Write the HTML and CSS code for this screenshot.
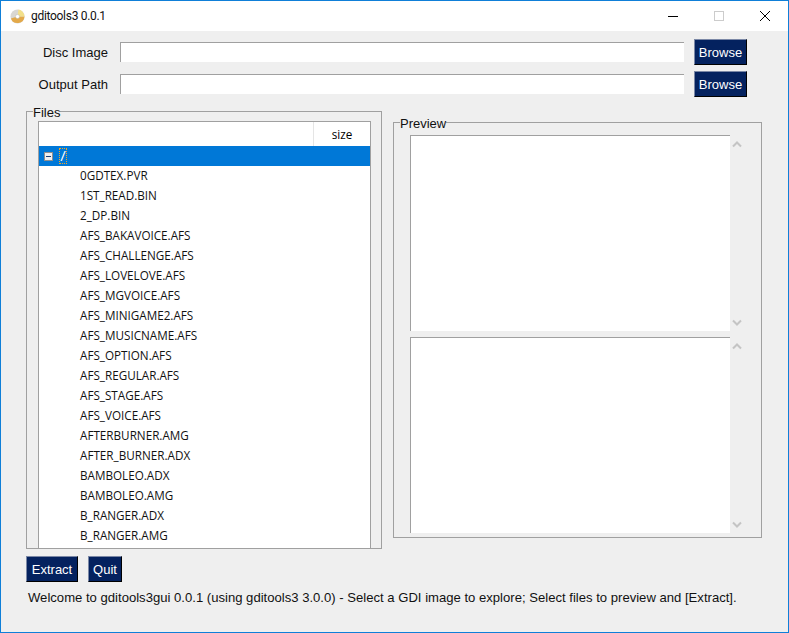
FILE: index.html
```html
<!DOCTYPE html>
<html lang="en">
<head>
    <meta charset="UTF-8">
    <title>gditools3 0.0.1</title>
    <link rel="stylesheet" href="styles.css">
</head>
<body>
    <div class="window">
        <div class="titlebar">
            <svg class="app-icon" width="15" height="15" viewBox="0 0 16 16">
                <circle cx="8" cy="8" r="7.5" fill="#d9d7d2"/>
                <path d="M1 10 A7.5 7.5 0 0 0 15.5 8 L8 8 Z" fill="#e3a94a"/>
                <path d="M9 .6 A7.5 7.5 0 0 1 15.5 8 L8 8 Z" fill="#f3e08a"/>
                <circle cx="8" cy="8" r="2.2" fill="#fff" stroke="#b8b6b0" stroke-width=".5"/>
            </svg>
            <span class="title">gditools3 0.0.1</span>
            <div class="controls">
                <svg width="46" height="30" viewBox="0 0 46 30"><path d="M18 15.5H28" stroke="#000" fill="none"/></svg>
                <svg width="46" height="30" viewBox="0 0 46 30"><rect x="18.5" y="10.5" width="9" height="9" stroke="#ccc" fill="none"/></svg>
                <svg width="46" height="30" viewBox="0 0 46 30"><path d="M18 10L28 20M28 10L18 20" stroke="#000" fill="none"/></svg>
            </div>
        </div>

        <div class="content">
            <div class="path-row">
                <label class="path-label">Disc Image</label>
                <div class="entry"></div>
                <button class="btn browse">Browse</button>
            </div>
            <div class="path-row">
                <label class="path-label">Output Path</label>
                <div class="entry"></div>
                <button class="btn browse">Browse</button>
            </div>

            <div class="panes">
                <fieldset class="files-frame">
                    <legend>Files</legend>
                    <div class="tree">
                        <div class="tree-head"><span class="head-size">size</span></div>
                        <div class="tree-row selected">
                            <span class="expander"></span>
                            <span class="root-name">/</span>
                        </div>
                        <div class="tree-row">0GDTEX.PVR</div>
                        <div class="tree-row">1ST_READ.BIN</div>
                        <div class="tree-row">2_DP.BIN</div>
                        <div class="tree-row">AFS_BAKAVOICE.AFS</div>
                        <div class="tree-row">AFS_CHALLENGE.AFS</div>
                        <div class="tree-row">AFS_LOVELOVE.AFS</div>
                        <div class="tree-row">AFS_MGVOICE.AFS</div>
                        <div class="tree-row">AFS_MINIGAME2.AFS</div>
                        <div class="tree-row">AFS_MUSICNAME.AFS</div>
                        <div class="tree-row">AFS_OPTION.AFS</div>
                        <div class="tree-row">AFS_REGULAR.AFS</div>
                        <div class="tree-row">AFS_STAGE.AFS</div>
                        <div class="tree-row">AFS_VOICE.AFS</div>
                        <div class="tree-row">AFTERBURNER.AMG</div>
                        <div class="tree-row">AFTER_BURNER.ADX</div>
                        <div class="tree-row">BAMBOLEO.ADX</div>
                        <div class="tree-row">BAMBOLEO.AMG</div>
                        <div class="tree-row">B_RANGER.ADX</div>
                        <div class="tree-row">B_RANGER.AMG</div>
                    </div>
                </fieldset>

                <fieldset class="preview-frame">
                    <legend>Preview</legend>
                    <div class="text-pane">
                        <div class="text-box"></div>
                        <div class="scroll">
                            <svg width="10" height="7" viewBox="0 0 10 7"><path d="M1 5.5L5 1.5L9 5.5" stroke="#c4c4c4" stroke-width="2" fill="none"/></svg>
                            <svg width="10" height="7" viewBox="0 0 10 7"><path d="M1 1.5L5 5.5L9 1.5" stroke="#c4c4c4" stroke-width="2" fill="none"/></svg>
                        </div>
                    </div>
                    <div class="text-pane">
                        <div class="text-box"></div>
                        <div class="scroll">
                            <svg width="10" height="7" viewBox="0 0 10 7"><path d="M1 5.5L5 1.5L9 5.5" stroke="#c4c4c4" stroke-width="2" fill="none"/></svg>
                            <svg width="10" height="7" viewBox="0 0 10 7"><path d="M1 1.5L5 5.5L9 1.5" stroke="#c4c4c4" stroke-width="2" fill="none"/></svg>
                        </div>
                    </div>
                </fieldset>
            </div>

            <div class="actions">
                <button class="btn extract">Extract</button>
                <button class="btn quit">Quit</button>
            </div>
            <p class="status">Welcome to gditools3gui 0.0.1 (using gditools3 3.0.0) - Select a GDI image to explore; Select files to preview and [Extract].</p>
        </div>
    </div>
</body>
</html>
```
FILE: styles.css
```css
* {
    box-sizing: border-box;
}
html, body {
    margin: 0;
    padding: 0;
}
body {
    width: 789px;
    height: 633px;
    overflow: hidden;
    font-family: "Liberation Sans", Arial, sans-serif;
    font-size: 13px;
    color: #000;
}
.window {
    width: 789px;
    height: 633px;
    display: flex;
    flex-direction: column;
    border: 1px solid #0f7fd8;
    background-color: #efefef;
}
.titlebar {
    height: 30px;
    flex: none;
    display: flex;
    align-items: center;
    background-color: #fff;
    padding-left: 9px;
}
.title {
    margin-left: 6px;
    font-family: "Roboto", sans-serif;
    font-size: 12px;
    letter-spacing: -0.3px;
    color: #111;
}
.controls {
    margin-left: auto;
    display: flex;
}
.content {
    flex: 1;
    display: flex;
    flex-direction: column;
    padding: 8px 0 0 25px;
}
.path-row {
    display: flex;
    align-items: center;
    height: 26px;
    margin-bottom: 6px;
}
.path-label {
    width: 82px;
    text-align: right;
    color: #111;
}
.entry {
    width: 564px;
    height: 20px;
    margin-left: 12px;
    background-color: #fff;
    border-top: 1px solid #a0a0a0;
    border-left: 1px solid #a0a0a0;
}
.btn {
    height: 26px;
    padding: 0;
    font-family: "Liberation Sans", Arial, sans-serif;
    font-size: 13px;
    color: #fff;
    background-color: #04225f;
    border: 1px solid;
    border-color: #7b88a6 #000 #000 #7b88a6;
}
.browse {
    width: 53px;
    margin-left: 10px;
}
.panes {
    display: flex;
    align-items: flex-start;
    margin-top: 1px;
}
fieldset {
    margin: 0;
    padding: 0;
    min-width: 0;
    border: 1px solid #a0a0a0;
}
legend {
    padding: 0;
    margin-left: 6px;
    font-size: 13px;
    line-height: 14px;
    transform: translateY(2px);
    color: #111;
}
.files-frame {
    width: 356px;
    height: 445px;
}
.tree {
    width: 333px;
    height: 427px;
    margin: 3px 0 0 11px;
    overflow: hidden;
    background-color: #fff;
    border-top: 1px solid #a0a0a0;
    border-left: 1px solid #a0a0a0;
    border-right: 1px solid #a0a0a0;
    font-family: "Open Sans", sans-serif;
    font-size: 11.7px;
}
.tree-head {
    height: 24px;
    display: flex;
    justify-content: flex-end;
}
.head-size {
    width: 57px;
    line-height: 24px;
    text-align: center;
    border-left: 1px solid #e5e5e5;
}
.tree-row {
    height: 20px;
    line-height: 18px;
    padding-left: 41px;
    white-space: nowrap;
    color: #111;
}
.tree-row.selected {
    display: flex;
    align-items: center;
    padding-left: 5px;
    background-color: #0078d7;
    color: #fff;
}
.expander {
    position: relative;
    width: 9px;
    height: 9px;
    margin-top: 1px;
    background-color: #f0f0f0;
    border: 1px solid #8f8f8f;
}
.expander::after {
    content: "";
    position: absolute;
    left: 1px;
    top: 3px;
    width: 5px;
    height: 1px;
    background-color: #1c3f77;
}
.root-name {
    width: 8px;
    height: 16px;
    margin-left: 6px;
    font-size: 15px;
    line-height: 15px;
    text-align: center;
    outline: 1px dotted #f5a623;
    outline-offset: -1px;
}
.preview-frame {
    width: 369px;
    height: 423px;
    margin-left: 11px;
    margin-top: 11px;
}
.text-pane {
    display: flex;
    height: 196px;
    margin: 6px 0 0 16px;
}
.text-box {
    width: 320px;
    background-color: #fff;
    border-top: 1px solid #a0a0a0;
    border-left: 1px solid #a0a0a0;
}
.scroll {
    width: 14px;
    display: flex;
    flex-direction: column;
    justify-content: space-between;
    align-items: center;
    padding: 6px 0 5px;
}
.actions {
    display: flex;
    gap: 10px;
    margin-top: 7px;
}
.extract {
    width: 52px;
}
.quit {
    width: 34px;
}
.status {
    margin: 8px 0 0 2px;
    font-size: 13.1px;
    line-height: 16px;
    white-space: nowrap;
    color: #111;
}
```
